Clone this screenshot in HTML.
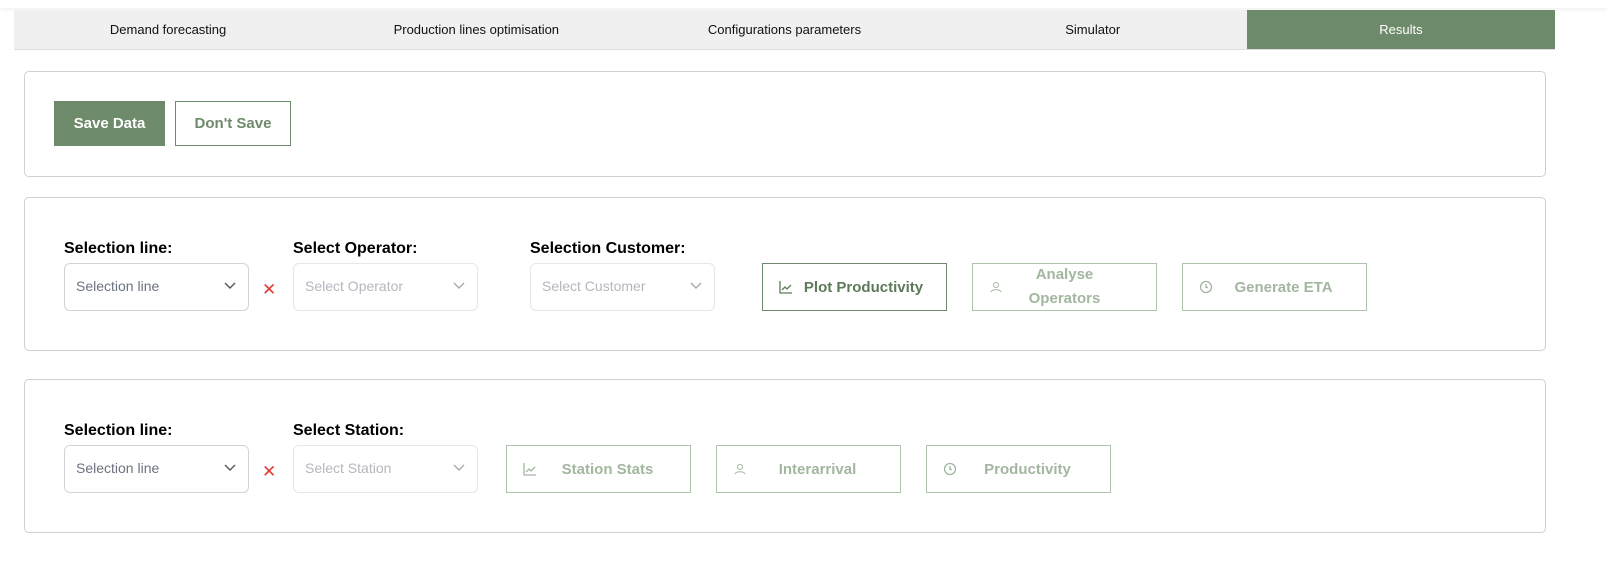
<!DOCTYPE html>
<html><head><style>
*{box-sizing:border-box;margin:0;padding:0}
body{width:1607px;height:565px;background:#fff;font-family:"Liberation Sans",sans-serif;position:relative;overflow:hidden}
.top{position:absolute;left:0;top:0;width:1607px;height:8px;box-shadow:0 1px 4px rgba(0,0,0,.08)}
.tabs{position:absolute;left:14px;top:10px;width:1541px;height:40px;background:#f0f0f0;border-bottom:1px solid #ddd;display:flex}
.tabs div{flex:1;text-align:center;line-height:40px;font-size:13px;color:#111}
.tabs .act{background:#6d8a6a;color:#fff}
.panel{position:absolute;left:24px;width:1522px;border:1px solid #d0d0d0;border-radius:5px}
.a{position:absolute}
.btn{position:absolute;font-weight:bold;font-size:15px;display:flex;align-items:center;justify-content:center;text-align:center}
.lbl{position:absolute;font-weight:bold;font-size:16px;color:#000}
.sel{position:absolute;width:185px;height:48px;border:1px solid #d4d4d8;border-radius:6px;font-size:14px;color:#6b7280;padding-left:11px;line-height:44px}
.sel.dis{border-color:#e7e7ea;color:#b4b7bd}
.sel svg{position:absolute;right:12px;top:18px}
.x{position:absolute;color:#e53935;font-size:17px}
.gb{border:1px solid #6d8a6a;color:#5d7a5a}
.db{border:1px solid #aec3ab;color:#a3b7a0}
.btn svg{position:absolute;left:16px;top:16px}
</style></head><body>
<div class="top"></div>
<div class="tabs"><div>Demand forecasting</div><div>Production lines optimisation</div><div>Configurations parameters</div><div>Simulator</div><div class="act">Results</div></div>

<div class="panel" style="top:71px;height:106px"></div>
<div class="btn" style="left:54px;top:101px;width:111px;height:45px;background:#6d8a6a;color:#fff">Save Data</div>
<div class="btn" style="left:175px;top:101px;width:116px;height:45px;border:1px solid #6d8a6a;color:#6d8a6a">Don't Save</div>

<div class="panel" style="top:197px;height:154px"></div>
<div class="lbl" style="left:64px;top:240px">Selection line:</div>
<div class="lbl" style="left:293px;top:240px">Select Operator:</div>
<div class="lbl" style="left:530px;top:240px">Selection Customer:</div>
<div class="sel" style="left:64px;top:263px">Selection line<svg width="12" height="8"><path d="M1 1l5 5 5-5" fill="none" stroke="#555" stroke-width="1.4"/></svg></div>
<div class="x" style="left:262px;top:280px">✕</div>
<div class="sel dis" style="left:293px;top:263px">Select Operator<svg width="12" height="8"><path d="M1 1l5 5 5-5" fill="none" stroke="#aaa" stroke-width="1.4"/></svg></div>
<div class="sel dis" style="left:530px;top:263px">Select Customer<svg width="12" height="8"><path d="M1 1l5 5 5-5" fill="none" stroke="#aaa" stroke-width="1.4"/></svg></div>
<div class="btn gb" style="left:762px;top:263px;width:185px;height:48px;padding-left:18px">Plot Productivity<svg width="14" height="14"><path d="M1 1v12h12M3 10l3-3 2 2 4-4" fill="none" stroke="#5d7a5a" stroke-width="1.3"/></svg></div>
<div class="btn db" style="left:972px;top:263px;width:185px;height:48px;line-height:24px">Analyse<br>Operators<svg width="14" height="14"><circle cx="7" cy="5" r="2.5" fill="none" stroke="#a3b7a0"/><path d="M2 12c1-3 9-3 10 0" fill="none" stroke="#a3b7a0"/></svg></div>
<div class="btn db" style="left:1182px;top:263px;width:185px;height:48px;padding-left:18px">Generate ETA<svg width="14" height="14"><circle cx="7" cy="7" r="5.5" fill="none" stroke="#a3b7a0" stroke-width="1.3"/><path d="M7 4v3.5h2" fill="none" stroke="#a3b7a0" stroke-width="1.3"/></svg></div>

<div class="panel" style="top:379px;height:154px"></div>
<div class="lbl" style="left:64px;top:422px">Selection line:</div>
<div class="lbl" style="left:293px;top:422px">Select Station:</div>
<div class="sel" style="left:64px;top:445px">Selection line<svg width="12" height="8"><path d="M1 1l5 5 5-5" fill="none" stroke="#555" stroke-width="1.4"/></svg></div>
<div class="x" style="left:262px;top:462px">✕</div>
<div class="sel dis" style="left:293px;top:445px">Select Station<svg width="12" height="8"><path d="M1 1l5 5 5-5" fill="none" stroke="#aaa" stroke-width="1.4"/></svg></div>
<div class="btn db" style="left:506px;top:445px;width:185px;height:48px;padding-left:18px">Station Stats<svg width="14" height="14"><path d="M1 1v12h12M3 10l3-3 2 2 4-4" fill="none" stroke="#a3b7a0" stroke-width="1.3"/></svg></div>
<div class="btn db" style="left:716px;top:445px;width:185px;height:48px;padding-left:18px">Interarrival<svg width="14" height="14"><circle cx="7" cy="5" r="2.5" fill="none" stroke="#a3b7a0"/><path d="M2 12c1-3 9-3 10 0" fill="none" stroke="#a3b7a0"/></svg></div>
<div class="btn db" style="left:926px;top:445px;width:185px;height:48px;padding-left:18px">Productivity<svg width="14" height="14"><circle cx="7" cy="7" r="5.5" fill="none" stroke="#a3b7a0" stroke-width="1.3"/><path d="M7 4v3.5h2" fill="none" stroke="#a3b7a0" stroke-width="1.3"/></svg></div>
</body></html>
